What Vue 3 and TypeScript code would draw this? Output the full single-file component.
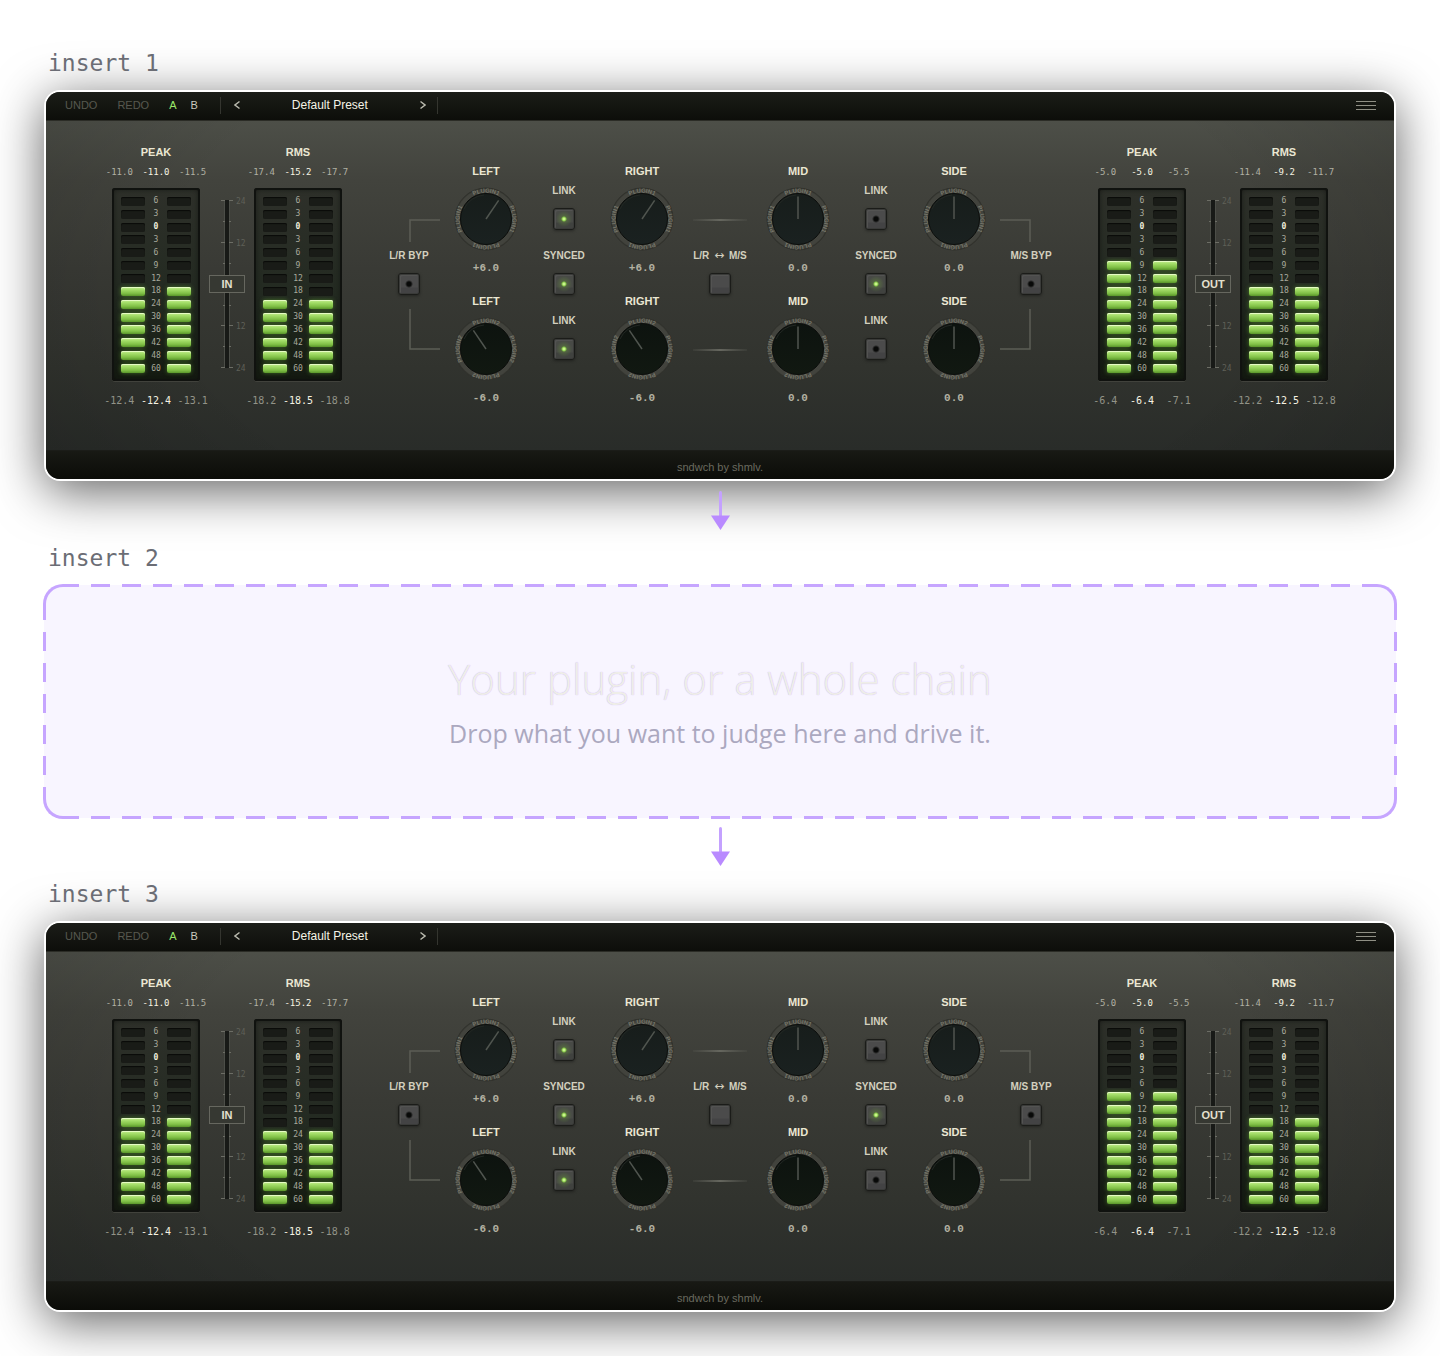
<script setup lang="ts">
import { reactive } from 'vue'

interface Meter {
  title: string
  top: string[]
  bottom: string[]
  lit: number
}
interface Side {
  name: string
  meters: Meter[]
}
interface Knob {
  label: string
  ring: string
  value: number
}
interface Toggle {
  label: string
  on: boolean
}

const scale = [6, 3, 0, 3, 6, 9, 12, 18, 24, 30, 36, 42, 48, 60]
const faderTicks = [
  { y: 0, label: '24' },
  { y: 21, label: '' },
  { y: 42, label: '12' },
  { y: 63, label: '' },
  { y: 105, label: '' },
  { y: 125, label: '12' },
  { y: 146, label: '' },
  { y: 167, label: '24' },
]

const input: Side = {
  name: 'IN',
  meters: [
    { title: 'PEAK', top: ['-11.0', '-11.0', '-11.5'], bottom: ['-12.4', '-12.4', '-13.1'], lit: 7 },
    { title: 'RMS', top: ['-17.4', '-15.2', '-17.7'], bottom: ['-18.2', '-18.5', '-18.8'], lit: 6 },
  ],
}
const output: Side = {
  name: 'OUT',
  meters: [
    { title: 'PEAK', top: ['-5.0', '-5.0', '-5.5'], bottom: ['-6.4', '-6.4', '-7.1'], lit: 9 },
    { title: 'RMS', top: ['-11.4', '-9.2', '-11.7'], bottom: ['-12.2', '-12.5', '-12.8'], lit: 7 },
  ],
}

const knobPair = (label: string, a: number, b: number): Knob[] => [
  { label, ring: 'PLUGIN1', value: a },
  { label, ring: 'PLUGIN2', value: b },
]
const toggles = (a: boolean, b: boolean, c: boolean): Toggle[] => [
  { label: 'LINK', on: a },
  { label: 'SYNCED', on: b },
  { label: 'LINK', on: c },
]

const makeRack = () => ({
  byLeft: false,
  byRight: false,
  gain: [0, 0],
  columns: [
    { kind: 'knobs', knobs: knobPair('LEFT', 6, -6), toggles: [] as Toggle[] },
    { kind: 'toggles', knobs: [] as Knob[], toggles: toggles(true, true, true) },
    { kind: 'knobs', knobs: knobPair('RIGHT', 6, -6), toggles: [] as Toggle[] },
    { kind: 'swap', knobs: [] as Knob[], toggles: [] as Toggle[] },
    { kind: 'knobs', knobs: knobPair('MID', 0, 0), toggles: [] as Toggle[] },
    { kind: 'toggles', knobs: [] as Knob[], toggles: toggles(false, true, false) },
    { kind: 'knobs', knobs: knobPair('SIDE', 0, 0), toggles: [] as Toggle[] },
  ],
})

const slots = reactive([
  { id: 1, rack: makeRack() },
  { id: 2, rack: null },
  { id: 3, rack: makeRack() },
])

const format = (v: number) => (v > 0 ? '+' : '') + v.toFixed(1)
const angle = (v: number) => v * 5.7
</script>

<template>
  <main class="page">
    <svg class="defs" width="0" height="0" aria-hidden="true">
      <defs>
        <path id="ring-arc" d="M5.500 32A26.500 26.500 0 0 1 58.500 32" />
        <linearGradient id="cap-one" x1="0" y1="0" x2="0" y2="1">
          <stop offset="0" stop-color="#171d1b" />
          <stop offset="1" stop-color="#1a2120" />
        </linearGradient>
        <linearGradient id="cap-two" x1="0" y1="0" x2="0" y2="1">
          <stop offset="0" stop-color="#0d130f" />
          <stop offset="1" stop-color="#111811" />
        </linearGradient>
        <linearGradient id="wire" x1="0" y1="0" x2="1" y2="0">
          <stop offset="0" stop-color="#5c5d56" stop-opacity="0.2" />
          <stop offset="0.5" stop-color="#66675f" />
          <stop offset="1" stop-color="#5c5d56" stop-opacity="0.2" />
        </linearGradient>
      </defs>
    </svg>

    <template v-for="slot in slots" :key="slot.id">
      <section class="slot">
        <h2 class="slot-label">insert {{ slot.id }}</h2>

        <article v-if="slot.rack" class="rack">
          <header class="bar">
            <button type="button" class="bar-btn dim">UNDO</button>
            <button type="button" class="bar-btn dim redo">REDO</button>
            <button type="button" class="bar-btn on">A</button>
            <button type="button" class="bar-btn">B</button>
            <div class="preset">
              <button type="button" class="arrow-btn" aria-label="Previous preset">
                <svg width="6" height="10" viewBox="0 0 6 10"><path d="M5.500 1.500L1 5L5.500 8.500" /></svg>
              </button>
              <button type="button" class="preset-name">Default Preset</button>
              <button type="button" class="arrow-btn" aria-label="Next preset">
                <svg width="6" height="10" viewBox="0 0 6 10"><path d="M0.500 1.500L5 5L0.500 8.500" /></svg>
              </button>
            </div>
            <button type="button" class="menu" aria-label="Menu"><i></i><i></i><i></i></button>
          </header>

          <div class="panel">
            <template v-for="(side, s) in [input, output]" :key="side.name">
              <div class="meters">
                <template v-for="(m, i) in side.meters" :key="m.title">
                  <div class="meter">
                    <h3 class="meter-title">{{ m.title }}</h3>
                    <div class="readout"><span v-for="(t, n) in m.top" :key="n">{{ t }}</span></div>
                    <div class="leds">
                      <div v-for="(n, r) in scale" :key="r" class="led-row">
                        <i class="led" :class="{ lit: r >= 14 - m.lit }"></i>
                        <span :class="{ zero: n === 0 }">{{ n }}</span>
                        <i class="led" :class="{ lit: r >= 14 - m.lit }"></i>
                      </div>
                    </div>
                    <div class="readout large"><span v-for="(t, n) in m.bottom" :key="n">{{ t }}</span></div>
                  </div>
                  <div v-if="i === 0" class="fader">
                    <svg width="32" height="170" viewBox="0 0 32 170">
                      <rect x="14" y="0" width="4" height="168" fill="#181a17" />
                      <path d="M13.500 0V168M18.500 0V168" stroke="#4c4e48" fill="none" />
                      <g v-for="t in faderTicks" :key="t.y">
                        <path
                          :d="t.label ? `M10 ${t.y + 0.5}h4M18 ${t.y + 0.5}h4` : `M12 ${t.y + 0.5}h2M18 ${t.y + 0.5}h2`"
                          stroke="#6c6d65"
                        />
                        <text v-if="t.label" x="25" :y="t.y + 4">{{ t.label }}</text>
                      </g>
                    </svg>
                    <span class="fader-cap">{{ side.name }}</span>
                    <input
                      v-model.number="slot.rack.gain[s]"
                      type="range"
                      min="-24"
                      max="24"
                      class="ghost"
                      :aria-label="side.name + ' gain'"
                    />
                  </div>
                </template>
              </div>

              <div v-if="s === 0" class="controls">
                <div class="column side-col">
                  <svg class="bracket" width="76" height="23" viewBox="0 0 76 23"><path d="M69 1H39V23" /></svg>
                  <label class="toggle wide">
                    <span>L/R BYP</span>
                    <input v-model="slot.rack.byLeft" type="checkbox" />
                  </label>
                  <svg class="bracket low" width="76" height="41" viewBox="0 0 76 41"><path d="M39 0V40H69" /></svg>
                </div>

                <div v-for="(c, k) in slot.rack.columns" :key="k" class="column" :class="c.kind">
                  <div v-for="knob in c.knobs" :key="knob.ring" class="knob">
                    <span class="knob-label">{{ knob.label }}</span>
                    <div class="dial">
                      <svg width="64" height="64" viewBox="0 0 64 64">
                        <circle cx="32" cy="32" r="31" fill="#393a34" stroke="#30312c" />
                        <circle cx="32" cy="32" r="30" fill="#42433d" />
                        <g v-for="a in [0, 90, 180, 270]" :key="a" :transform="`rotate(${a} 32 32)`">
                          <text class="ring-text">
                            <textPath href="#ring-arc" startOffset="50%">{{ knob.ring }}</textPath>
                          </text>
                        </g>
                        <circle
                          cx="32"
                          cy="32"
                          r="25.500"
                          :fill="knob.ring === 'PLUGIN1' ? 'url(#cap-one)' : 'url(#cap-two)'"
                          stroke="#0c0e0c"
                        />
                        <path d="M10 22A24 24 0 0 1 30 8" fill="none" stroke="#222723" />
                        <path
                          d="M32 32V9.500"
                          stroke="#50554f"
                          stroke-width="1.500"
                          :transform="`rotate(${angle(knob.value)} 32 32)`"
                        />
                      </svg>
                      <input
                        v-model.number="knob.value"
                        type="range"
                        min="-24"
                        max="24"
                        step="0.1"
                        class="ghost"
                        :aria-label="knob.label + ' ' + knob.ring"
                      />
                    </div>
                    <output class="knob-value">{{ format(knob.value) }}</output>
                  </div>

                  <label v-for="(t, n) in c.toggles" :key="n" class="toggle">
                    <span>{{ t.label }}</span>
                    <input v-model="t.on" type="checkbox" />
                  </label>

                  <template v-if="c.kind === 'swap'">
                    <svg class="link-line" width="54" height="2"><rect width="54" height="2" fill="url(#wire)" /></svg>
                    <div class="toggle wide">
                      <span>L/R <b class="arrows">↔</b> M/S</span>
                      <button type="button" class="swap-btn" aria-label="Swap L/R and M/S"></button>
                    </div>
                    <svg class="link-line low" width="54" height="2"><rect width="54" height="2" fill="url(#wire)" /></svg>
                  </template>
                </div>

                <div class="column side-col">
                  <svg class="bracket" width="76" height="23" viewBox="0 0 76 23"><path d="M7 1H37V23" /></svg>
                  <label class="toggle wide">
                    <span>M/S BYP</span>
                    <input v-model="slot.rack.byRight" type="checkbox" />
                  </label>
                  <svg class="bracket low" width="76" height="41" viewBox="0 0 76 41"><path d="M37 0V40H7" /></svg>
                </div>
              </div>
            </template>
          </div>

          <footer class="foot">sndwch by shmlv.</footer>
        </article>

        <article v-else class="drop">
          <i v-for="e in ['top', 'bottom', 'left', 'right']" :key="e" class="edge" :class="e"></i>
          <i v-for="c in ['tl', 'tr', 'bl', 'br']" :key="c" class="corner" :class="c"></i>
          <p class="drop-title">Your plugin, or a whole chain</p>
          <p class="drop-text">Drop what you want to judge here and drive it.</p>
        </article>
      </section>

      <svg v-if="slot.id < 3" class="flow" width="20" height="39" viewBox="0 0 20 39" aria-hidden="true">
        <path d="M10.500 1.500V26" stroke="#c4a1ff" stroke-width="3" stroke-linecap="round" />
        <path d="M1 24.500H20L10.500 39Z" fill="#b98aff" />
      </svg>
    </template>
  </main>
</template>

<style>
body {
  margin: 0;
  background: #fff;
}
</style>

<style scoped>
.page {
  display: flex;
  flex-direction: column;
  padding: 48px 44px 44px;
  font-family: 'Liberation Sans', Arial, sans-serif;
}
.defs {
  position: absolute;
}
button {
  margin: 0;
  padding: 0;
  border: 0;
  background: none;
  font-family: inherit;
  cursor: pointer;
}
.slot-label {
  position: relative;
  z-index: 1;
  margin: 0 0 12px 4px;
  font: 400 23px/30px 'DejaVu Sans Mono', monospace;
  color: #6b6d75;
}
.flow {
  position: relative;
  z-index: 1;
  align-self: center;
  margin: 10px 0 13px;
}

/* rack */
.rack {
  border: 2px solid #fff;
  border-radius: 16px;
  overflow: hidden;
  background: #2c2e2a;
  box-shadow: 0 10px 50px rgba(0, 0, 0, 0.62);
}
.bar {
  display: flex;
  align-items: center;
  height: 29px;
  padding: 0 18px 2px 19px;
  box-sizing: border-box;
  background: linear-gradient(#1b1d18, #0d0e0a);
  border-bottom: 1px solid #2b2c26;
}
.bar-btn {
  margin-right: 14px;
  font-size: 11px;
  line-height: 16px;
  color: #c9c9bd;
}
.bar-btn.dim {
  margin-right: 20px;
  color: #57584f;
}
.bar-btn.on {
  color: #9be86a;
}
.preset {
  display: flex;
  align-items: center;
  justify-content: space-between;
  width: 192px;
  height: 17px;
  margin-left: 8px;
  padding: 0 11px 0 13px;
  border: solid #34352f;
  border-width: 0 1px;
}
.arrow-btn {
  display: flex;
}
.arrow-btn path {
  fill: none;
  stroke: #b9b9ad;
  stroke-width: 1.5;
}
.preset-name {
  font-size: 12px;
  line-height: 16px;
  color: #f4f3e6;
}
.menu {
  display: flex;
  flex-direction: column;
  gap: 3px;
  width: 20px;
  margin-left: auto;
}
.menu i {
  height: 1px;
  background: #8f8f84;
}
.panel {
  display: flex;
  justify-content: space-between;
  padding: 0 55px 42px;
  background:
    radial-gradient(ellipse 62% 130% at 50% 45%, rgba(0, 0, 0, 0) 65%, rgba(0, 0, 0, 0.16) 100%),
    linear-gradient(#4d4f48 0, #42433d 18%, #393a35 45%, #31332e 75%, #292c29 100%);
}
.foot {
  border-top: 1px solid #1b1c18;
  padding: 8px 0 4px;
  background: linear-gradient(#181914, #0b0c08);
  font-size: 11px;
  line-height: 16px;
  text-align: center;
  color: #6a6a5f;
}

/* meters */
.meters {
  display: flex;
  padding-top: 23px;
}
.meter {
  width: 110px;
}
.meter-title {
  margin: 0;
  font-size: 11px;
  line-height: 16px;
  text-align: center;
  color: #ebe7d3;
}
.readout {
  display: grid;
  grid-template-columns: repeat(3, 1fr);
  margin: 5px 0 9px;
  font: 9px/14px 'DejaVu Sans Mono', monospace;
  text-align: center;
  color: #b0b0a3;
}
.readout span:nth-child(2) {
  color: #f5f3e2;
}
.readout.large {
  margin: 13px 0 0;
  font-size: 10px;
  color: #929388;
}
.leds {
  display: grid;
  grid-template-rows: repeat(14, 1fr);
  box-sizing: border-box;
  width: 88px;
  height: 193px;
  margin: 0 auto;
  padding: 7px 9px 6px;
  border-radius: 3px;
  background: linear-gradient(#2e302a, #232a21 55%, #141a11);
  box-shadow:
    inset 0 0 0 2px #10120f,
    inset 0 0 6px #0c0e0b,
    0 1px 0 #41423c;
}
.led-row {
  display: flex;
  align-items: center;
  justify-content: space-between;
  font: 8px/10px 'DejaVu Sans Mono', monospace;
  color: #a9aa9d;
}
.zero {
  font-weight: 700;
  color: #f0eedd;
}
.led {
  width: 24px;
  height: 9px;
  border-radius: 2px;
  background: #191b17;
  box-shadow: inset 0 1px 1px #090a08;
}
.led.lit {
  background: linear-gradient(#c4ec92 0, #a3dd68 30%, #80c046 70%, #5a962b);
  box-shadow:
    inset 0 1px 0 #e6fbc4,
    0 0 4px rgba(110, 190, 50, 0.5);
}
.fader {
  position: relative;
  width: 32px;
  margin-top: 56px;
  height: 170px;
}
.fader svg {
  overflow: visible;
  display: block;
}
.fader text {
  font: 8px 'DejaVu Sans Mono', monospace;
  fill: #5f6058;
}
.fader-cap {
  position: absolute;
  top: 75px;
  left: -2px;
  width: 34px;
  border: 1px solid #66675f;
  background: #363832;
  font-size: 11px;
  font-weight: 700;
  line-height: 16px;
  text-align: center;
  color: #e3e0cf;
}
.ghost {
  position: absolute;
  inset: 0;
  width: 100%;
  height: 100%;
  margin: 0;
  opacity: 0;
  cursor: pointer;
}

/* controls */
.controls {
  display: grid;
  grid-template-columns: 76px repeat(7, 78px) 76px;
}
.column {
  display: flex;
  flex-direction: column;
  align-items: center;
}
.knobs {
  gap: 17px;
  padding-top: 42px;
}
.knob {
  display: flex;
  flex-direction: column;
  align-items: center;
}
.knob-label {
  font-size: 11px;
  font-weight: 700;
  line-height: 16px;
  color: #ebe7d3;
}
.dial {
  position: relative;
  width: 64px;
  height: 64px;
  margin: 8px 0 9px;
}
.dial svg {
  display: block;
}
.ring-text {
  font: 700 6px 'Liberation Sans Narrow', 'Liberation Sans', sans-serif;
  text-anchor: middle;
  fill: #77776b;
}
.knob-value {
  font: 700 11px/16px 'Liberation Mono', monospace;
  color: #b3b1a2;
}
.toggles {
  gap: 19px;
  padding-top: 63px;
}
.toggle {
  display: flex;
  flex-direction: column;
  align-items: center;
  gap: 10px;
  font-size: 10px;
  font-weight: 700;
  line-height: 14px;
  white-space: pre;
  color: #d3d0bf;
}
.arrows {
  margin: 0 2px;
  font: 12px/12px 'DejaVu Sans', sans-serif;
}
.toggle input,
.swap-btn {
  appearance: none;
  box-sizing: border-box;
  width: 22px;
  height: 22px;
  margin: 0;
  border: 1px solid #1b1c19;
  border-radius: 3px;
  background: linear-gradient(#4b4b4b 0 65%, #434344 70%);
  box-shadow:
    inset 0 0 0 1px #3a3b39,
    inset 2px 2px 0 #535352,
    0 1px 3px rgba(0, 0, 0, 0.35);
}
.toggle input {
  background:
    radial-gradient(circle at center, #080908 0 2px, rgba(8, 9, 8, 0) 4px),
    linear-gradient(#4b4b4b 0 65%, #434344 70%);
}
.toggle input:checked {
  background:
    radial-gradient(circle at center, #c8f58a 0 1px, #7fc043 2px, rgba(100, 140, 60, 0.4) 3px, rgba(90, 120, 60, 0) 8px),
    linear-gradient(#484a46 0 65%, #40423f 70%);
}
.side-col,
.swap {
  padding-top: 98px;
}
.bracket path {
  fill: none;
  stroke: #5c5e56;
  stroke-width: 1.5;
}
.bracket,
.link-line {
  display: block;
}
.wide {
  margin-top: 7px;
}
.low {
  margin-top: 14px;
}
.link-line {
  margin-bottom: 21px;
}
.link-line.low {
  margin: 54px 0 0;
}

/* drop area */
.drop {
  position: relative;
  box-sizing: border-box;
  min-height: 233px;
  margin-bottom: -1px;
  padding: 64px 20px 0;
  border-radius: 18px;
  background: #f8f5ff;
  text-align: center;
}
.edge,
.corner {
  position: absolute;
}
.top,
.bottom {
  left: 35px;
  right: 34px;
  height: 3px;
  background: repeating-linear-gradient(90deg, transparent 0 12px, #c6a5ff 12px 31px);
}
.left,
.right {
  top: 35px;
  bottom: 31px;
  width: 3px;
  background: repeating-linear-gradient(transparent 0 12px, #c6a5ff 12px 31px);
}
.top,
.tl,
.tr {
  top: -1px;
}
.bottom,
.bl,
.br {
  bottom: -1px;
}
.left,
.tl,
.bl {
  left: -1px;
}
.right,
.tr,
.br {
  right: -1px;
}
.corner {
  box-sizing: border-box;
  width: 36px;
  height: 36px;
  border: 0 solid #c6a5ff;
}
.tl {
  border-width: 3px 0 0 3px;
  border-top-left-radius: 20px;
}
.tr {
  width: 35px;
  border-width: 3px 3px 0 0;
  border-top-right-radius: 20px;
}
.bl {
  height: 32px;
  border-width: 0 0 3px 3px;
  border-bottom-left-radius: 20px;
}
.br {
  width: 35px;
  height: 32px;
  border-width: 0 3px 3px 0;
  border-bottom-right-radius: 20px;
}
.drop-title {
  margin: 0;
  font: 300 42px/60px 'Open Sans', 'Noto Sans', sans-serif;
  color: #efeee8;
  text-shadow: 0 0 1px #c4abf8;
}
.drop-text {
  margin: 6px 0 0;
  font: 400 25px/36px 'Open Sans', 'Noto Sans', sans-serif;
  color: #aba8bf;
}
</style>
